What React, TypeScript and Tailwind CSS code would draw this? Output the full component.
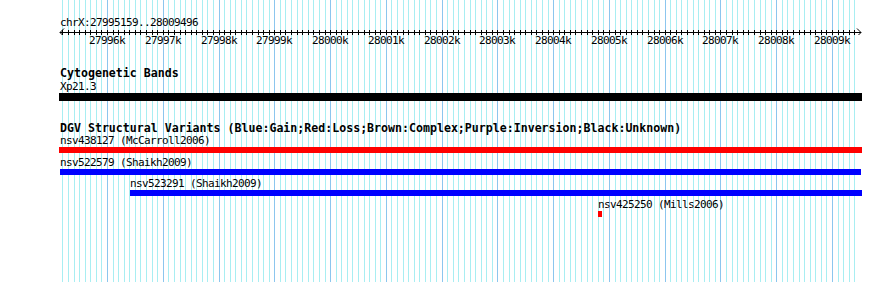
const VIEW_START = 27995159;
const VIEW_END = 28009496;

// pixel position of a base on the 890px canvas
const px = (bp: number) => 107 + (bp - 27996000) * 0.05577;

const mono = "font-['DejaVu_Sans_Mono','Liberation_Mono',monospace]";
const small = "text-[11px] leading-[11px] tracking-[-0.62px]";
const bold = "text-[11.6px] leading-[12px] font-bold";

const gridStops: number[] = [];
for (let bp = 27995200; bp < VIEW_END; bp += 100) gridStops.push(bp);

interface Variant {
  name: string;
  source: string;
  left: number;
  right: number;
  color: string;
  mt: string;
}

const variants: Variant[] = [
  { name: "nsv438127", source: "McCarroll2006", left: 59, right: 862, color: "bg-[#ff0000]", mt: "mt-px" },
  { name: "nsv522579", source: "Shaikh2009", left: 60, right: 861, color: "bg-[#0000ff]", mt: "mt-[4px]" },
  { name: "nsv523291", source: "Shaikh2009", left: 130, right: 862, color: "bg-[#0000ff]", mt: "mt-[3px]" },
  { name: "nsv425250", source: "Mills2006", left: 598, right: 602, color: "bg-[#ff0000]", mt: "mt-[3px]" },
];

function Grid() {
  return (
    <svg className="absolute inset-0" width={890} height={282} shapeRendering="crispEdges">
      {gridStops.map((bp) => {
        const x = Math.round(px(bp)) + 0.5;
        const major = bp % 1000 === 0;
        return <line key={bp} x1={x} x2={x} y1={0} y2={282} stroke={major ? "#8cc6ee" : "#a8eef2"} strokeWidth={1} />;
      })}
    </svg>
  );
}

function Ruler() {
  const y = 4.5;
  return (
    <svg width={890} height={7} className="block" shapeRendering="crispEdges">
      <line x1={60} x2={861} y1={y} y2={y} stroke="#000" />
      <path d="M60 4.5 L64 0.5 M60 4.5 L64 8.5" stroke="#000" fill="none" shapeRendering="auto" />
      <path d="M861 4.5 L857 0.5 M861 4.5 L857 8.5" stroke="#000" fill="none" shapeRendering="auto" />
      {gridStops.map((bp) => {
        const x = Math.round(px(bp)) + 0.5;
        return <line key={bp} x1={x} x2={x} y1={2} y2={7} stroke="#000" />;
      })}
    </svg>
  );
}

export default function App() {
  const majors = gridStops.filter((bp) => bp % 1000 === 0);
  return (
    <div className={`relative w-[890px] h-[282px] overflow-hidden bg-white text-black ${mono}`}>
      <Grid />
      <div className="relative pt-[17px]">
        <div className={`pl-[60px] ${small}`}>
          chrX:{VIEW_START}..{VIEW_END}
        </div>
        <Ruler />
        <div className={`relative h-[11px] ${small}`}>
          {majors.map((bp) => (
            <span key={bp} className="absolute top-0 -translate-x-1/2" style={{ left: Math.round(px(bp)) }}>
              {bp / 1000}k
            </span>
          ))}
        </div>

        <div className={`mt-[21px] pl-[60px] ${bold}`}>Cytogenetic Bands</div>
        <div className={`mt-[2px] pl-[60px] ${small}`}>Xp21.3</div>
        <div className="mt-px ml-[59px] w-[803px] h-[8px] bg-black" />

        <div className={`mt-[21px] pl-[60px] whitespace-nowrap ${bold}`}>
          DGV Structural Variants (Blue:Gain;Red:Loss;Brown:Complex;Purple:Inversion;Black:Unknown)
        </div>

        {variants.map((v) => (
          <div key={v.name}>
            <div className={`${v.mt} whitespace-nowrap ${small}`} style={{ paddingLeft: Math.max(v.left, 60) }}>
              {v.name} ({v.source})
            </div>
            <div className={`mt-px h-[6px] ${v.color}`} style={{ marginLeft: v.left, width: v.right - v.left }} />
          </div>
        ))}
      </div>
    </div>
  );
}
